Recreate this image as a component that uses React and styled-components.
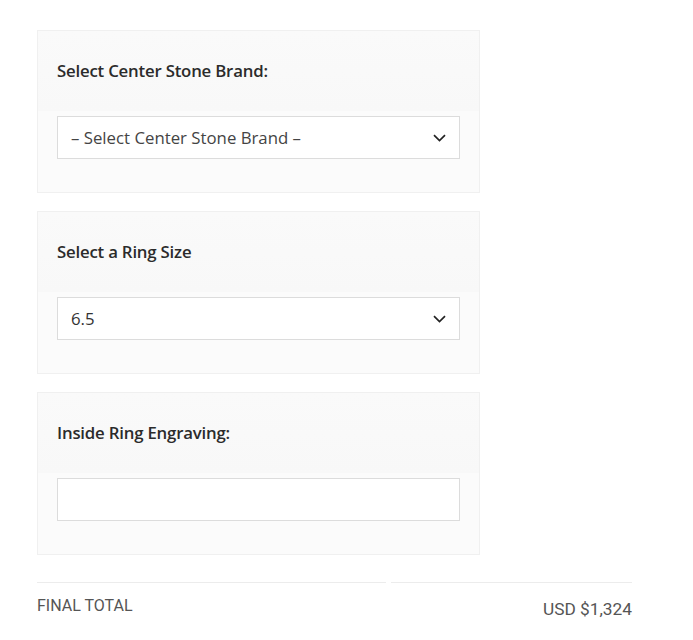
import React from 'react';
import styled, { createGlobalStyle } from 'styled-components';

const GlobalStyle = createGlobalStyle`
  body {
    margin: 0;
    background: #fff;
    font-family: "Open Sans", Lato, sans-serif;
  }
`;

const Page = styled.div`
  width: 595px;
  padding: 30px 0 0 37px;
`;

const Card = styled.div`
  width: 441px;
  border: 1px solid #f0f0f0;
  background: #fbfbfb;
  margin-bottom: 18px;
  padding-bottom: 33px;
`;

const CardHead = styled.div`
  height: 80px;
  padding: 0 19px;
  display: flex;
  align-items: center;
  background: linear-gradient(#fafafa, #f8f8f8);
  margin-bottom: 5px;
`;

const Label = styled.label`
  font-size: 16.8px;
  font-weight: 600;
  color: #2b2b2b;
  letter-spacing: -0.2px;
  margin-top: -2px;
`;

const Field = styled.div`
  margin: 0 19px;
  height: 41px;
  border: 1px solid #dcdcdc;
  background: #fff;
  display: flex;
  align-items: center;
  justify-content: space-between;
  padding: 0 13px;
  font-size: 16.8px;
  color: ${(p) => (p.$muted ? '#444' : '#333')};
`;

const Chevron = () => (
  <svg width="13" height="8" viewBox="0 0 13 8" fill="none">
    <path d="M1 1.2l5.5 5.3 5.5-5.3" stroke="#222" strokeWidth="1.7" />
  </svg>
);

const Footer = styled.div`
  width: 595px;
  display: grid;
  grid-template-columns: 349px 1fr;
  column-gap: 5px;
  margin-top: 27px;
  font-family: Roboto, sans-serif;
  color: #555;
`;

const Rule = styled.div`
  border-top: 1px solid #ececec;
  height: 0;
`;

const TotalLabel = styled.div`
  padding-top: 13px;
  font-size: 16px;
`;

const TotalValue = styled.div`
  padding-top: 16px;
  font-size: 17.3px;
  text-align: right;
`;

export default function App() {
  return (
    <>
      <GlobalStyle />
      <Page>
        <Card>
          <CardHead>
            <Label>Select Center Stone Brand:</Label>
          </CardHead>
          <Field $muted>
            <span>– Select Center Stone Brand –</span>
            <Chevron />
          </Field>
        </Card>
        <Card>
          <CardHead>
            <Label>Select a Ring Size</Label>
          </CardHead>
          <Field>
            <span>6.5</span>
            <Chevron />
          </Field>
        </Card>
        <Card>
          <CardHead>
            <Label>Inside Ring Engraving:</Label>
          </CardHead>
          <Field />
        </Card>
        <Footer>
          <Rule />
          <Rule />
          <TotalLabel>FINAL TOTAL</TotalLabel>
          <TotalValue>USD $1,324</TotalValue>
        </Footer>
      </Page>
    </>
  );
}
